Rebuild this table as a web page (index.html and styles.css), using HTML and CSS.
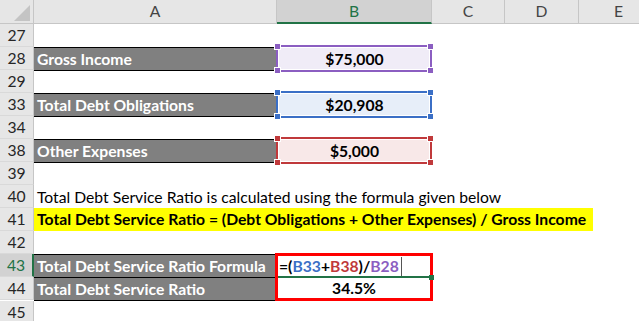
FILE: index.html
```html
<!DOCTYPE html>
<html>
<head>
<meta charset="utf-8">
<link rel="stylesheet" href="styles.css">
</head>
<body>
<div class="sheet">
  <div class="hdr">
    <div class="corner"><svg width="33" height="24" viewBox="0 0 33 24"><polygon points="30,5 30,21 14,21" fill="#c4c4c4"/></svg></div>
    <div class="ch">A</div>
    <div class="ch sel">B</div>
    <div class="ch">C</div>
    <div class="ch">D</div>
    <div class="ch">E</div>
  </div>

  <div class="row"><div class="rh">27</div></div>
  <div class="row">
    <div class="rh">28</div>
    <div class="label">Gross Income</div>
    <div class="val"><span class="frame purple"><i class="h tl"></i><i class="h tr"></i><i class="h bl"></i><i class="h br"></i></span><span class="num">$75,000</span></div>
  </div>
  <div class="row"><div class="rh">29</div></div>
  <div class="row">
    <div class="rh">33</div>
    <div class="label">Total Debt Obligations</div>
    <div class="val"><span class="frame blue"><i class="h tl"></i><i class="h tr"></i><i class="h bl"></i><i class="h br"></i></span><span class="num">$20,908</span></div>
  </div>
  <div class="row"><div class="rh">34</div></div>
  <div class="row">
    <div class="rh">38</div>
    <div class="label">Other Expenses</div>
    <div class="val"><span class="frame red"><i class="h tl"></i><i class="h tr"></i><i class="h bl"></i><i class="h br"></i></span><span class="num">$5,000</span></div>
  </div>
  <div class="row"><div class="rh">39</div></div>
  <div class="row">
    <div class="rh">40</div>
    <div class="text">Total Debt Service Ratio is calculated using the formula given below</div>
  </div>
  <div class="row">
    <div class="rh">41</div>
    <div class="text hl">Total Debt Service Ratio = (Debt Obligations + Other Expenses) / Gross Income</div>
  </div>
  <div class="row"><div class="rh">42</div></div>

  <div class="pair">
    <div class="pair-rh">
      <div class="rh cur">43</div>
      <div class="rh">44</div>
    </div>
    <div class="pair-a">
      <div class="label">Total Debt Service Ratio Formula</div>
      <div class="label">Total Debt Service Ratio</div>
    </div>
    <div class="pair-b">
      <div class="edit"><span class="k">=(</span><span class="rb">B33</span><span class="k">+</span><span class="rr">B38</span><span class="k">)/</span><span class="rp">B28</span><span class="caret"></span><i class="fill"></i></div>
      <div class="result">34.5%</div>
    </div>
  </div>

  <div class="row"><div class="rh">45</div></div>
</div>
</body>
</html>
```

FILE: styles.css
```css
* { box-sizing: border-box; }
html, body { margin: 0; padding: 0; background: #fff; }
body { font-family: Lato, "Open Sans", sans-serif; font-size: 15.7px; color: #000; width: 639px; height: 321px; overflow: hidden; }

.sheet { width: 639px; }

.hdr { display: grid; grid-template-columns: 34px 243px 155px 73px 74px 80px; height: 24px; background: #e6e6e6; border-bottom: 1px solid #c6c6c6; }
.corner { border-right: 1px solid #c6c6c6; height: 23px; }
.corner svg { display: block; }
.ch { text-align: center; line-height: 23px; color: #444; border-right: 1px solid #c6c6c6; height: 23px; }
.ch.sel { background: #d2d2d2; color: #217346; border-bottom: 2px solid #217346; height: 24px; line-height: 23px; }

.row { display: grid; grid-template-columns: 34px 243px 155px; height: 23px; }
.rh { width: 34px; height: 23px; background: #e6e6e6; border-right: 1px solid #c6c6c6; border-bottom: 1px solid #d9d9d9; text-align: center; line-height: 23px; color: #262626; }
.rh.cur { background: #d2d2d2; color: #217346; border-right: 2px solid #217346; }

.label { height: 24px; background: #808080; border-top: 1px solid #000; border-bottom: 1px solid #000; color: #fff; font-weight: 700; line-height: 22px; padding-left: 3px; white-space: nowrap; }

.val { position: relative; height: 23px; }
.num { position: relative; display: block; text-align: center; font-weight: 700; line-height: 24px; }
.frame { position: absolute; left: -1px; top: -2px; width: 156px; height: 27px; border: 2px solid; box-shadow: inset 0 0 0 1px #fff; }
.frame .h { position: absolute; width: 7px; height: 7px; border: 1px solid #fff; }
.frame .tl { left: -4px; top: -4px; }
.frame .tr { right: -4px; top: -4px; }
.frame .bl { left: -4px; bottom: -4px; }
.frame .br { right: -4px; bottom: -4px; }
.purple { border-color: #8b5ec1; background: #f0ecf7; }
.purple .h { background: #8b5ec1; }
.blue { border-color: #3b6fc6; background: #e7eef9; }
.blue .h { background: #3b6fc6; }
.red { border-color: #c0393b; background: #f8e8e8; }
.red .h { background: #c0393b; }

.text { grid-column: 2 / 4; white-space: nowrap; line-height: 24px; padding-left: 3px; }
.text.hl { font-weight: 700; background: #ffff00; width: 559px; line-height: 23px; }

.pair { display: grid; grid-template-columns: 34px 242px 157px; }
.pair-a { display: flex; flex-direction: column; }
.pair-a .label { height: 24px; margin-bottom: -1px; }
.pair-b { border: 3px solid #ff0000; margin-left: -1px; margin-top: -1px; height: 48px; position: relative; }
.edit { position: relative; height: 22px; border-bottom: 2px solid #217346; margin-right: 1px; font-weight: 700; line-height: 20px; padding-left: 1px; white-space: nowrap; display: flex; align-items: center; }
.k { color: #000; }
.rb { color: #3b6fc6; }
.rr { color: #c0393b; }
.rp { color: #8b5ec1; }
.caret { display: inline-block; width: 1px; height: 19px; background: #555; margin-left: 2px; }
.fill { position: absolute; right: -5px; bottom: -4px; width: 5px; height: 5px; background: #217346; }
.result { text-align: center; font-weight: 700; line-height: 21px; }
```
